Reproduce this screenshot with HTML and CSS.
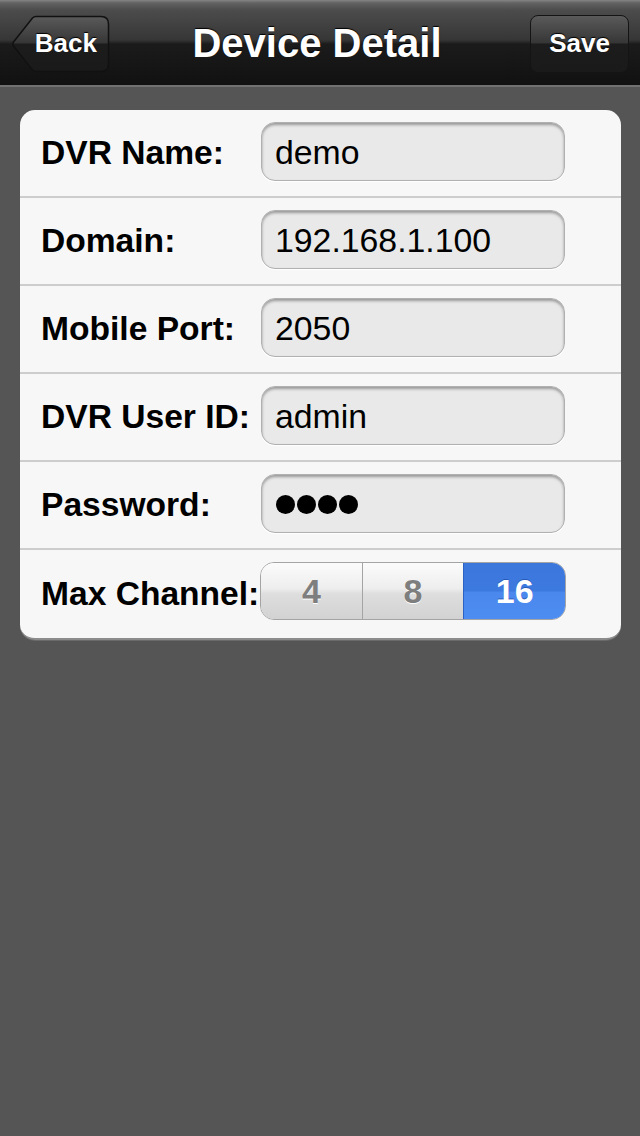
FILE: index.html
```html
<!DOCTYPE html>
<html>
<head>
<meta charset="utf-8">
<link rel="stylesheet" href="styles.css">
</head>
<body>
<header class="navbar">
  <div class="nav-left">
    <button class="back-btn">
      <svg class="back-shape" viewBox="0 0 99 58" width="99" height="58">
        <defs>
          <linearGradient id="bg" x1="0" y1="0" x2="0" y2="1">
            <stop offset="0" stop-color="#5a5a5a"/>
            <stop offset="0.48" stop-color="#363636"/>
            <stop offset="0.5" stop-color="#1c1c1c"/>
            <stop offset="1" stop-color="#1a1a1a"/>
          </linearGradient>
        </defs>
        <path d="M25 1.5 H90 Q97.5 1.5 97.5 9 V49 Q97.5 56.5 90 56.5 H25 Q23 56.5 21.5 55 L2.5 31 Q1.2 29 2.5 27 L21.5 3 Q23 1.5 25 1.5 Z" fill="url(#bg)" stroke="#111" stroke-width="1.5"/>
      </svg>
      <span class="btn-label back-label">Back</span>
    </button>
  </div>
  <h1 class="title">Device Detail</h1>
  <div class="nav-right">
    <button class="save-btn"><span class="btn-label">Save</span></button>
  </div>
</header>

<main class="content">
  <section class="card">
    <div class="row">
      <span class="label">DVR Name:</span>
      <div class="field">demo</div>
    </div>
    <div class="row">
      <span class="label">Domain:</span>
      <div class="field">192.168.1.100</div>
    </div>
    <div class="row">
      <span class="label">Mobile Port:</span>
      <div class="field">2050</div>
    </div>
    <div class="row">
      <span class="label">DVR User ID:</span>
      <div class="field">admin</div>
    </div>
    <div class="row">
      <span class="label">Password:</span>
      <div class="field password" aria-label="password">
        <span class="dot"></span><span class="dot"></span><span class="dot"></span><span class="dot"></span>
      </div>
    </div>
    <div class="row last">
      <span class="label">Max Channel:</span>
      <div class="segmented">
        <div class="seg">4</div>
        <div class="seg">8</div>
        <div class="seg selected">16</div>
      </div>
    </div>
  </section>
</main>
</body>
</html>
```

FILE: styles.css
```css
* { box-sizing: border-box; }

html, body {
  margin: 0;
  padding: 0;
  background: #555555;
  font-family: "Liberation Sans", Arial, Helvetica, sans-serif;
  width: 640px;
  height: 1136px;
}

.navbar {
  height: 87px;
  display: grid;
  grid-template-columns: 1fr auto 1fr;
  align-items: center;
  padding: 4px 11px 2px 11px;
  background: linear-gradient(to bottom, #858585 0px, #626262 3px, #4c4c4c 10px, #363636 40px, #1b1b1b 44px, #111111 84px);
  border-bottom: 2px solid #717171;
}

.nav-left { display: flex; justify-content: flex-start; }
.nav-right { display: flex; justify-content: flex-end; }

.title {
  margin: 0;
  color: #fff;
  font-size: 40px;
  font-weight: bold;
  text-shadow: 0 -1px 1px #000;
  padding-right: 6px;
  white-space: nowrap;
}

button {
  font-family: inherit;
  border: none;
  padding: 0;
  margin: 0;
  cursor: pointer;
}

.back-btn {
  position: relative;
  width: 99px;
  height: 58px;
  background: transparent;
  display: flex;
  align-items: center;
  justify-content: flex-end;
}

.back-shape {
  position: absolute;
  left: 0;
  top: 0;
}

.btn-label {
  position: relative;
  color: #fff;
  font-size: 26px;
  font-weight: bold;
  text-shadow: 0 -1px 1px #000;
}

.back-label {
  padding-right: 13px;
}

.save-btn {
  width: 99px;
  height: 58px;
  border-radius: 8px;
  border: 1.5px solid #141414;
  background: linear-gradient(to bottom, #5a5a5a 0%, #363636 48%, #1c1c1c 50%, #1a1a1a 100%);
  display: flex;
  align-items: center;
  justify-content: center;
}

.content {
  padding: 23px 19px 0 20px;
}

.card {
  background: #f7f7f7;
  border-radius: 15px;
  border-bottom: 2px solid #8c8c8c;
  box-shadow: 0 1px 0 #6a6a6a;
  overflow: hidden;
}

.row {
  height: 88px;
  display: flex;
  align-items: center;
  border-bottom: 2px solid #cdcdcd;
  padding-left: 21px;
}

.row.last {
  border-bottom: none;
}

.label {
  width: 220px;
  font-size: 33.6px;
  font-weight: bold;
  color: #000;
  white-space: nowrap;
}

.field {
  width: 304px;
  height: 59px;
  border-radius: 14px;
  background: #e9e9e9;
  border: 1px solid #b0b0b0;
  box-shadow: inset 0 2px 3px rgba(0,0,0,0.35), 0 1px 0 #ffffff;
  display: flex;
  align-items: center;
  padding-left: 13px;
  padding-top: 2px;
  font-size: 33.8px;
  color: #000;
  margin-bottom: 3px;
}

.field.password {
  gap: 2px;
  padding-left: 14px;
}

.dot {
  width: 19px;
  height: 19px;
  border-radius: 50%;
  background: #000;
}

.segmented {
  width: 306px;
  height: 58px;
  display: flex;
  border-radius: 14px;
  overflow: hidden;
  border: 1px solid #a4a4a4;
  margin-left: -1px;
  margin-bottom: 6px;
}

.seg {
  flex: 1;
  display: flex;
  align-items: center;
  justify-content: center;
  font-size: 34px;
  font-weight: bold;
  color: #7e7e7e;
  text-shadow: 0 1px 0 #fff;
  background: linear-gradient(to bottom, #fbfbfb 0%, #eeeeee 45%, #dedede 55%, #d2d2d2 100%);
}

.seg + .seg {
  border-left: 1px solid #a4a4a4;
}

.seg.selected {
  color: #fff;
  text-shadow: 0 -1px 0 #2a5ab8;
  background: linear-gradient(to bottom, #3b76db 0%, #3d7ae0 50%, #4a88ee 52%, #4d8cf0 100%);
  border-left: 1px solid #2d62c4;
}
```
